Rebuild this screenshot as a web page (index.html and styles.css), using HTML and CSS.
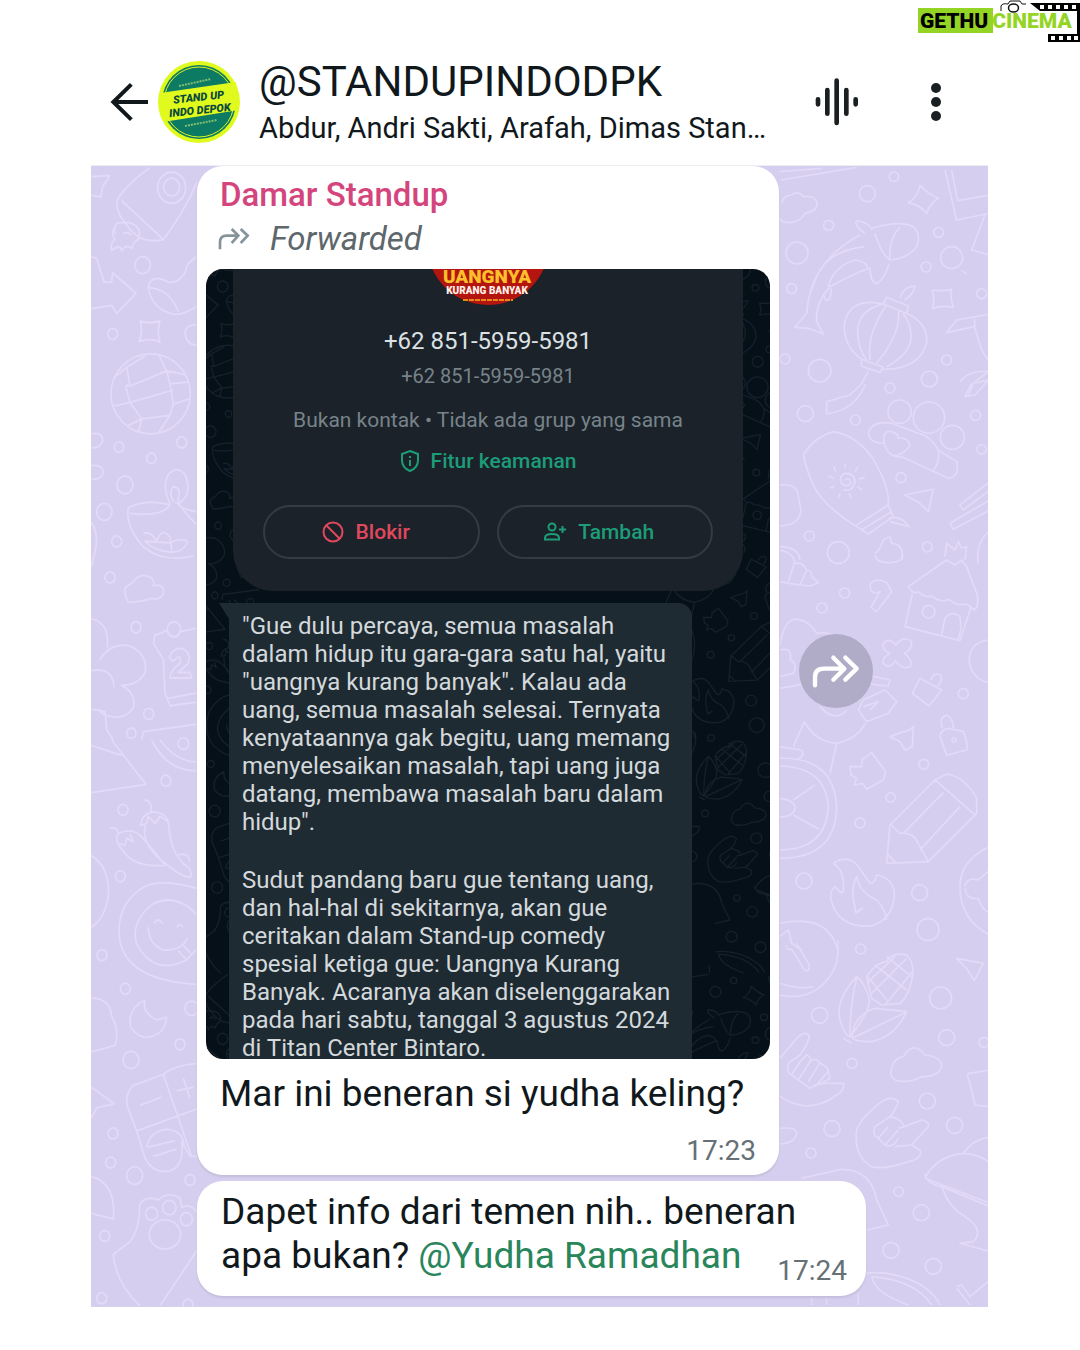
FILE: index.html
```html
<!DOCTYPE html>
<html lang="id">
<head>
<meta charset="utf-8">
<meta name="viewport" content="width=device-width, initial-scale=1">
<title>@STANDUPINDODPK</title>
<link rel="stylesheet" href="styles.css">
</head>
<body>
<svg class="defs" aria-hidden="true">
  <defs>
    <g id="doodles">
      <!-- left column, upper part -->
      <g transform="translate(90 160) scale(.3333 .37)">
        <path d="M4 45L60 42L38 72L32 100L4 95M180 20Q90 80 80 115Q82 150 110 175Q150 230 220 215Q290 130 320 60M95 110L220 215M75 180Q60 200 75 215Q60 225 65 245Q90 225 95 245Q110 225 125 240Q130 220 145 215Q155 195 140 180Q120 165 95 170Q70 165 75 200M100 200Q115 190 125 205M4 262L20 265L42 330L65 330L68 305L138 360L80 415L65 393L4 402M320 262Q290 275 285 305Q265 335 235 330Q180 305 175 345Q185 405 255 418Q290 415 320 395M178 345Q240 350 265 410M150 435Q180 445 210 435Q200 460 210 492Q180 480 148 490Q160 460 150 435M110 560L120 610L105 610M118 612L230 570L240 605L250 660L240 690L155 700L120 655L108 615M120 655L250 622M70 590L110 560L165 530M205 525L230 570L285 580M240 605L295 600M250 660L300 645M240 690L205 738M155 700L145 735M120 655L70 665M155 700L110 720M240 930Q215 880 235 850Q262 825 285 850Q300 880 290 905Q270 935 255 925M250 925Q235 895 250 883Q275 885 265 915Q262 935 320 985M115 940Q170 915 240 932Q220 965 120 955M115 940Q105 990 160 1045Q220 1090 310 1070M320 950Q280 945 262 930M160 1010Q180 1000 200 1030Q215 990 240 1020Q245 1045 245 1060M240 1035Q270 1020 292 1030Q285 1060 240 1060Q190 1055 165 1030ZM108 1180Q95 1155 125 1145Q150 1110 185 1130Q195 1145 190 1150Q225 1145 220 1170Q215 1190 185 1185Q155 1195 115 1195ZM4 1240Q60 1250 52 1320M30 1350Q65 1300 125 1315Q175 1340 165 1385Q145 1420 95 1420Q140 1440 130 1480Q110 1510 70 1505Q35 1500 25 1485M4 1380Q70 1370 72 1425M4 1485L45 1490L50 1540L70 1568M320 1265L270 1275Q265 1290 250 1290Q235 1285 230 1272L195 1285L190 1305L220 1350L225 1440L240 1475L320 1465M235 1455L320 1440M238 1345Q245 1320 275 1320Q305 1330 295 1360L265 1385L300 1385L305 1400L240 1400Q240 1380 270 1360Q275 1345 265 1342L250 1355ZM155 1568L160 1545L320 1525M4 980Q28 1010 15 1060L4 1100M4 740Q40 735 38 760Q30 780 4 778M4 825Q45 825 38 850Q30 865 4 862M320 445Q285 445 285 470Q290 500 320 500"/>
        <circle cx="245" cy="75" r="42"/><circle cx="245" cy="73" r="24"/><circle cx="158" cy="284" r="23"/><circle cx="68" cy="470" r="15"/><ellipse cx="182" cy="632" rx="119" ry="108"/><circle cx="275" cy="763" r="15"/><circle cx="87" cy="776" r="14"/><circle cx="184" cy="806" r="14"/><circle cx="105" cy="878" r="24"/><circle cx="43" cy="951" r="23"/><circle cx="80" cy="1031" r="15"/><circle cx="60" cy="1128" r="15"/><circle cx="138" cy="1263" r="15"/><circle cx="176" cy="1497" r="15"/><circle cx="252" cy="1268" r="20"/><circle cx="124" cy="1549" r="14"/>
      </g>
      <!-- left column, lower part -->
      <g transform="translate(90 740) scale(.3333 .3636)">
        <path d="M4 15L95 42M65 0L168 122L4 145M185 0Q230 85 320 85M210 0Q260 60 320 60M160 165Q190 165 182 200Q155 205 152 235L170 230L175 210L195 230L210 210L235 225Q225 195 182 198M165 235Q155 290 220 335Q270 375 300 378Q310 370 295 350Q240 320 235 220M60 240L80 245L85 258M85 258Q70 275 100 305Q130 350 225 345Q180 290 150 262Q120 240 85 258M90 285L105 290L110 270L130 280L120 258M265 315Q300 310 298 335M4 318Q60 350 55 430Q45 490 4 515M320 408Q210 380 160 405Q80 450 88 540Q100 660 320 672M320 480Q260 420 190 450Q120 500 140 560Q190 650 290 605L320 575M175 515Q175 560 220 578Q275 580 292 545M192 505Q205 485 218 505M260 515Q270 500 278 515M265 580L290 605M280 565L305 590M4 710Q60 710 65 760Q90 800 75 840L4 858M165 715Q110 740 122 790Q160 840 215 800Q230 780 230 762L200 770Q155 750 165 715M320 890Q250 895 220 920L130 950Q100 980 115 1015L140 1075L165 1150Q190 1195 240 1185Q285 1170 275 1105L300 1145L320 1145M220 920L305 1145M140 1075L320 1015M150 1005L215 982M260 965L310 955M280 930L300 985M170 1120Q180 1075 230 1070Q280 1075 282 1115M175 1120L255 1102M190 1145L260 1125M4 955L72 1000L20 1012L4 1040M4 1200Q80 1220 70 1318L4 1302M150 1300Q140 1265 180 1260Q195 1260 205 1265Q235 1240 270 1260L275 1285Q310 1275 320 1300M148 1300Q145 1350 120 1380L70 1415Q75 1490 150 1556M320 1405L210 1556"/>
        <circle cx="280" cy="10" r="16"/><circle cx="228" cy="112" r="15"/><circle cx="99" cy="192" r="15"/><circle cx="91" cy="375" r="15"/><circle cx="36" cy="592" r="15"/><circle cx="106" cy="684" r="15"/><circle cx="270" cy="837" r="15"/><circle cx="123" cy="880" r="24"/><circle cx="305" cy="738" r="20"/><circle cx="69" cy="1082" r="15"/><circle cx="62" cy="1162" r="15"/><circle cx="134" cy="1198" r="24"/><circle cx="300" cy="1210" r="15"/><circle cx="185" cy="1303" r="18"/><circle cx="238" cy="1286" r="20"/><circle cx="289" cy="1318" r="18"/><ellipse cx="225" cy="1360" rx="47" ry="40"/><circle cx="44" cy="1364" r="15"/><circle cx="35" cy="1535" r="15"/><circle cx="294" cy="1553" r="15"/>
      </g>
      <!-- right column, upper part -->
      <g transform="translate(775 160) scale(.3333)">
        <path d="M14 35L140 25M18 60L245 22M20 130Q25 105 50 105Q70 90 85 110Q120 105 127 130Q125 155 90 160Q75 185 45 188Q20 188 14 175M510 30L545 180L645 160M530 30L548 122L645 105M435 75Q455 100 490 115Q465 130 455 160Q435 135 400 128Q430 110 435 75M630 165L590 270L645 285M270 220Q235 195 245 183Q280 185 292 210M292 205Q370 180 415 200Q440 225 425 260Q400 295 345 300Q320 285 300 220M375 200Q340 240 345 295M255 225Q170 270 130 340Q100 390 95 460L60 502L100 505L145 522L125 485Q120 430 165 380Q230 345 280 325M268 260Q190 270 150 310Q125 340 110 390M160 380Q175 320 240 300Q280 305 278 330M285 322Q285 365 305 372Q330 355 342 312M145 400Q150 430 165 415L170 385M325 432L335 412L400 438L395 460ZM375 415Q385 380 420 378Q415 405 388 420M325 432Q225 410 208 490Q205 560 260 598M395 460Q460 490 455 550Q430 630 325 628M330 430Q245 450 248 520Q250 570 275 600M335 435Q275 520 285 600M370 450Q380 520 305 610M385 460Q450 560 335 620M260 598L325 622L315 638L258 618ZM280 635L260 672L225 705L155 725L155 762Q240 750 272 672M470 390Q500 395 530 388Q525 415 535 442Q505 435 472 445Q482 415 470 390M645 462L545 480L515 518L598 500L620 570L645 610M598 475L600 500M555 665Q580 630 640 635L600 665M580 705L595 670L640 660L600 705L570 710L590 670M560 332L575 342M280 820Q290 780 350 790L430 820Q470 830 490 870L545 905Q555 950 520 955L380 890Q340 895 328 850Q285 850 280 820M328 850Q320 810 350 815Q370 820 370 835Q395 830 405 855Q395 880 355 888M490 870Q495 910 475 930M85 885Q120 830 175 815Q240 825 290 890Q345 980 340 1035L355 1070L280 1122L245 1100Q150 1040 120 985Q95 935 85 885M245 1095L340 1035M262 1108L350 1055M340 1075Q380 1065 402 1100L345 1085M210 960Q225 950 228 970Q215 985 200 970Q190 950 210 940Q240 940 240 965Q235 995 205 990M210 925V910M175 920L183 935M160 948L175 955M165 985L178 978M190 1015L195 1000M228 1015L222 1000M262 990L248 982M270 952L252 957M250 920L240 935M390 1005L475 988L460 1055L435 1030ZM645 965L555 1035L565 1050L645 990M645 1020L525 1090L535 1108L645 1050M14 975Q70 970 70 1010L78 1050Q75 1095 14 1098M300 1180Q315 1170 325 1140L345 1130L350 1150Q390 1155 380 1200M645 1110Q600 1150 610 1210M510 1190L515 1150L540 1170L550 1145L560 1165L575 1160L570 1200M14 1160Q70 1160 75 1200"/>
        <circle cx="357" cy="50" r="14"/><circle cx="277" cy="101" r="24"/><circle cx="161" cy="196" r="15"/><circle cx="66" cy="279" r="33"/><circle cx="491" cy="217" r="15"/><circle cx="530" cy="293" r="33"/><circle cx="453" cy="321" r="15"/><circle cx="50" cy="386" r="15"/><circle cx="620" cy="401" r="15"/><circle cx="30" cy="597" r="15"/><circle cx="515" cy="600" r="15"/><circle cx="134" cy="632" r="34"/><circle cx="463" cy="657" r="24"/><circle cx="345" cy="684" r="15"/><circle cx="91" cy="761" r="24"/><circle cx="241" cy="780" r="15"/><circle cx="374" cy="755" r="35"/><circle cx="462" cy="773" r="47"/><circle cx="532" cy="832" r="36"/><circle cx="602" cy="766" r="15"/><circle cx="620" cy="868" r="14"/><circle cx="378" cy="953" r="15"/><circle cx="103" cy="1128" r="15"/><circle cx="190" cy="1178" r="33"/><circle cx="457" cy="1161" r="15"/>
      </g>
      <!-- right column, middle part -->
      <g transform="translate(775 550) scale(.3333)">
        <path d="M14 0Q60 10 58 40Q85 35 95 60Q110 60 110 80L130 98L105 108Q60 105 14 95M58 40L40 95M95 60L75 105M300 15Q305 40 345 38Q390 35 382 10M515 30L400 110Q415 135 430 125Q450 145 470 138Q500 160 520 148Q550 170 575 162L600 180Q615 160 605 130L575 50L560 30L540 45ZM412 130L390 230L555 272L588 172M500 255L510 205Q530 180 555 200L558 235L550 268M285 105Q300 80 335 98L350 125L305 185L288 172L315 125L300 130Q285 125 285 105M325 280Q345 260 362 285Q385 255 410 275Q410 300 388 310Q415 330 405 350Q380 360 362 332Q340 360 325 340Q320 325 345 310Q320 300 325 280M645 270Q585 275 582 330Q590 390 645 398M412 430L435 385L500 420L462 468ZM468 390Q475 365 497 375Q505 390 488 408M495 560Q495 540 520 535L565 545Q580 580 575 600L515 616ZM503 535Q490 505 515 495Q535 505 535 535M345 560L385 545Q400 545 415 530L412 590L390 600L375 575ZM225 650L260 650L262 628L290 608L332 665L325 690L275 718L262 700L238 705L245 685L228 675ZM14 285Q30 200 70 208Q105 215 125 250Q180 240 190 285M14 300Q55 290 45 330Q70 340 55 370L14 380M14 415L100 400M95 310L180 330L160 400L270 430M275 375L345 390L340 408L265 400M250 480L275 515L340 490L365 455L330 420L265 450ZM265 470L310 455L285 480M55 590L88 515Q120 575 185 580Q250 565 270 520M185 580L165 670M135 470Q180 520 215 480M14 590L80 600Q90 620 70 625M14 625Q180 620 185 775Q180 925 14 925M14 648Q155 650 160 775Q150 900 14 900M14 745Q60 750 60 775Q55 800 14 802M55 750L120 705M55 795L132 838M345 825L480 690L515 672Q570 680 605 745L605 790L460 935L335 940ZM480 690L600 795M385 850L505 728M435 900L555 770M348 825L375 850Q415 845 430 880L460 935M335 910L362 938M175 940Q220 910 250 950L285 1000Q300 1000 305 975Q360 985 358 1040Q350 1110 290 1128Q190 1135 168 1050Q165 1020 180 1010Q200 1035 205 1025Q210 960 175 940M240 1070Q225 1020 245 980Q255 1030 305 1050Q335 1085 335 1110M240 1070Q240 1100 262 1075L240 1090M645 890Q555 930 555 1010Q555 1110 645 1155M570 1010Q575 980 610 990L645 960M570 1015Q575 1050 610 1045Q620 1080 645 1090M14 1120Q160 1090 188 1200M14 1160L40 1140L50 1180L80 1200"/>
        <circle cx="209" cy="129" r="15"/><circle cx="141" cy="174" r="15"/><circle cx="461" cy="185" r="19"/><circle cx="565" cy="431" r="15"/><circle cx="446" cy="643" r="15"/><circle cx="347" cy="742" r="14"/><circle cx="255" cy="819" r="15"/><circle cx="87" cy="993" r="24"/><circle cx="434" cy="1028" r="24"/><circle cx="459" cy="1139" r="33"/><circle cx="537" cy="570" r="6"/>
      </g>
      <!-- right column, lower part -->
      <g transform="translate(775 940) scale(.3333)">
        <path d="M188 0Q200 90 130 145Q80 180 14 165M14 130Q70 150 115 140M35 15Q30 30 50 28L90 92Q105 95 103 75L65 10M545 55L625 70L598 122L575 85ZM275 110Q300 70 335 65Q350 35 395 45Q420 70 412 115Q400 170 375 190L320 195L290 175ZM300 75L395 150M335 50L410 110M278 110L340 185M395 55L290 160M412 95L330 195M360 50L275 130M245 110Q180 180 195 240Q210 290 225 290Q290 210 282 175Q270 130 245 110M245 115Q225 190 225 290M232 295Q230 230 300 205L395 215Q360 290 290 305Q240 305 232 295M232 295L390 218M205 295L230 310M14 355L70 290Q95 270 103 290Q100 310 75 345L40 370Q35 400 50 405L105 445L130 430L205 430Q210 450 185 465Q140 500 85 497Q40 490 14 468M50 405Q75 360 95 345Q110 350 105 365L70 420M105 365Q120 350 135 368L100 425M135 370Q160 380 160 395L120 440M160 395L165 415L130 435M350 385Q355 355 385 350Q415 300 450 345Q500 350 500 380Q490 410 440 410Q400 430 365 422Q340 410 350 385M245 570Q260 530 320 485Q350 465 370 485Q360 515 345 530Q380 535 388 560L440 540Q465 545 460 560L410 615L435 630Q445 655 400 665Q330 690 290 680Q235 650 245 570M345 530L300 560Q290 585 310 595L340 560M310 595L330 615L370 570M330 615Q355 625 370 595M388 560L370 565M360 620L410 615M645 390L580 400Q575 410 585 430L600 495L645 500M14 565Q65 560 65 580Q60 610 14 612M80 715L200 688Q290 690 305 780L340 855L275 870M645 590Q590 600 565 640M450 715Q480 650 565 640Q620 645 645 670M450 715L645 790M450 700Q450 730 500 740L645 800M500 740Q520 800 570 830Q630 870 595 905L555 910L645 935M275 1000Q350 990 430 1030Q480 1060 495 1095M290 1010Q300 1060 400 1095M290 1010Q420 1020 470 1095M250 1095V1060M545 1040L560 1035L585 1070L645 1020M545 1045L585 1095M110 1095V1070M155 1095V1070"/>
        <circle cx="257" cy="27" r="15"/><circle cx="134" cy="226" r="24"/><circle cx="497" cy="174" r="33"/><circle cx="515" cy="293" r="24"/><circle cx="231" cy="370" r="15"/><circle cx="457" cy="483" r="24"/><circle cx="171" cy="566" r="24"/><circle cx="539" cy="556" r="24"/><circle cx="108" cy="639" r="15"/><circle cx="371" cy="755" r="14"/><circle cx="439" cy="818" r="24"/><circle cx="348" cy="931" r="24"/><circle cx="475" cy="979" r="24"/><circle cx="627" cy="307" r="15"/>
      </g>
    </g>
  </defs>
</svg>

<div class="watermark">
  <svg class="film" viewBox="0 0 162 42" aria-hidden="true">
    <rect x="0" y="8" width="75" height="25" fill="#94d424"/>
    <path fill="#000" d="M112 3H162V42H130V34H159V11H122Z"/>
    <path fill="#fff" d="M122 5h4v4h-4zM130 5h4v4h-4zM138 5h4v4h-4zM146 5h4v4h-4zM154 5h4v4h-4zM133 36h4v4h-4zM141 36h4v4h-4zM149 36h4v4h-4zM156 36h4v4h-4z"/>
    <path fill="#fff" stroke="#111" d="M83 11V6Q84 3 90 4L92 1H102L104 4H108"/>
    <ellipse cx="95.500" cy="8" rx="5" ry="4" fill="#fff" stroke="#111" stroke-width="1.500"/>
  </svg>
  <p class="brand"><span class="brand-dark">GETHU</span><span class="brand-lime">CINEMA</span></p>
</div>

<main class="screen">
  <header class="topbar">
    <button class="icon-btn back" aria-label="Kembali">
      <svg width="40" height="40" viewBox="60 120 120 120"><path d="M174 180H70M124 127L70 180L124 233" fill="none" stroke="#11181c" stroke-width="12"/></svg>
    </button>
    <svg class="group-photo" viewBox="0 0 84 84" role="img" aria-label="Stand Up Indo Depok">
      <circle cx="42" cy="42" r="41" fill="#e0fa1e"/>
      <circle cx="42" cy="42" r="37" fill="#0d7a63"/>
      <circle cx="42" cy="42" r="35" fill="none" stroke="#d8f51e" stroke-width="1"/>
      <path d="M3 33L79 22L82 50L6 62Z" fill="#e0fa1e"/>
      <path d="M22 26L54 19M28 66L60 60" stroke="#7fbf74" stroke-width="2" stroke-dasharray="2 1"/>
      <g class="photo-text" transform="rotate(-6 42 42)">
        <text x="42" y="41" text-anchor="middle">STAND UP</text>
        <text x="42" y="54" text-anchor="middle">INDO DEPOK</text>
      </g>
    </svg>
    <div class="group">
      <h1>@STANDUPINDODPK</h1>
      <p>Abdur, Andri Sakti, Arafah, Dimas Stan…</p>
    </div>
    <div class="actions">
      <button class="icon-btn" aria-label="Obrolan suara">
        <svg width="46" height="52" viewBox="104 225 138 156"><path d="M116 295V310M144 267V338M172 239V366M201 267V338M229 295V310" fill="none" stroke="#1a1f22" stroke-width="14" stroke-linecap="round"/></svg>
      </button>
      <button class="icon-btn" aria-label="Menu">
        <svg width="24" height="44" viewBox="433 237 72 132" fill="#1a1f22"><circle cx="469" cy="261" r="15"/><circle cx="469" cy="303" r="15"/><circle cx="469" cy="345" r="15"/></svg>
      </button>
    </div>
  </header>

  <section class="chat">
    <svg class="wallpaper" viewBox="91 166 897 1141" preserveAspectRatio="xMidYMin slice" aria-hidden="true"><use href="#doodles"/></svg>

    <div class="thread">
      <div class="row">
        <article class="bubble bubble-media">
          <h2>Damar Standup</h2>
          <p class="forwarded">
            <svg width="32" height="24" viewBox="385 557 96 72" aria-hidden="true"><path d="M391 624V603Q391 583 411 583H444M426 563L446 583L426 605M453 563L474 583L453 605" fill="none" stroke="#87939a" stroke-width="8"/></svg>
            Forwarded
          </p>

          <div class="shot">
            <svg class="shot-wall" viewBox="206 269 564 790" preserveAspectRatio="xMidYMin slice" aria-hidden="true">
              <use href="#doodles" transform="translate(131 114) scale(.67 .65)"/>
              <use href="#doodles" transform="translate(131 855) scale(.67 .65)"/>
            </svg>
            <div class="shot-body">
              <div class="contact">
                <svg class="contact-photo" width="122" height="36" viewBox="0 86 122 36" role="img" aria-label="Uangnya Kurang Banyak">
                  <circle cx="61" cy="61" r="61" fill="#b5150f"/>
                  <text class="poster-title" x="60" y="100" text-anchor="middle">UANGNYA</text>
                  <text class="poster-sub" x="60" y="111" text-anchor="middle">KURANG BANYAK</text>
                  <path d="M36 117H86" stroke="#e88a1a" stroke-width="2" stroke-dasharray="5 1"/>
                </svg>
                <p class="phone">+62 851-5959-5981</p>
                <p class="phone-sub">+62 851-5959-5981</p>
                <p class="status">Bukan kontak • Tidak ada grup yang sama</p>
                <a class="safety" href="#">
                  <svg width="20" height="24" viewBox="0 0 20 24" fill="none" stroke="currentColor" stroke-width="2" aria-hidden="true"><path d="M10 2L18 5V11Q18 19 10 22Q2 19 2 11V5ZM10 11V17M10 7V9"/></svg>
                  Fitur keamanan
                </a>
                <div class="choices">
                  <button class="pill block">
                    <svg width="24" height="24" viewBox="0 0 24 24" fill="none" stroke="currentColor" stroke-width="2" aria-hidden="true"><circle cx="12" cy="12" r="9.500"/><path d="M5.500 5.500L18.500 18.500"/></svg>
                    Blokir
                  </button>
                  <button class="pill add">
                    <svg width="24" height="24" viewBox="0 0 24 24" fill="none" stroke="currentColor" stroke-width="2" aria-hidden="true"><circle cx="9" cy="7" r="3.500"/><path d="M2 19.500V18Q2 14 9 14T16 18V19.500ZM19.500 6V13M16 9.500H23"/></svg>
                    Tambah
                  </button>
                </div>
              </div>
              <div class="quote-row">
                <svg class="tail" width="10" height="16" viewBox="0 0 10 16" aria-hidden="true"><path d="M0 0H10V16Z" fill="#1f2b32"/></svg>
                <div class="quote">
                  <p>"Gue dulu percaya, semua masalah<br>dalam hidup itu gara-gara satu hal, yaitu<br>"uangnya kurang banyak". Kalau ada<br>uang, semua masalah selesai. Ternyata<br>kenyataannya gak begitu, uang memang<br>menyelesaikan masalah, tapi uang juga<br>datang, membawa masalah baru dalam<br>hidup".</p>
                  <p>Sudut pandang baru gue tentang uang,<br>dan hal-hal di sekitarnya, akan gue<br>ceritakan dalam Stand-up comedy<br>spesial ketiga gue: Uangnya Kurang<br>Banyak. Acaranya akan diselenggarakan<br>pada hari sabtu, tanggal 3 agustus 2024<br>di Titan Center Bintaro.</p>
                </div>
              </div>
            </div>
          </div>

          <p class="text">Mar ini beneran si yudha keling?</p>
          <time class="time">17:23</time>
        </article>
        <button class="share" aria-label="Teruskan">
          <svg width="74" height="74" viewBox="72 246 222 222" aria-hidden="true"><path d="M120 400V376Q120 350 146 350H206M175 317L208 350L175 383M211 317L245 350L211 383" fill="none" stroke="#fff" stroke-width="13" stroke-linecap="round" stroke-linejoin="round"/></svg>
        </button>
      </div>

      <article class="bubble bubble-text">
        <p class="text">Dapet info dari temen nih.. beneran<br>apa bukan? <a href="#">@Yudha Ramadhan</a></p>
        <time class="time">17:24</time>
      </article>
    </div>
  </section>
</main>
</body>
</html>
```
FILE: styles.css
```css
* {
  box-sizing: border-box;
}

body,
h1,
h2,
p {
  margin: 0;
}

body {
  background: #fff;
  color: #11181c;
  font-family: Roboto, "Liberation Sans", sans-serif;
}

button {
  margin: 0;
  padding: 0;
  border: 0;
  background: none;
  font: inherit;
  cursor: pointer;
}

a {
  color: inherit;
  text-decoration: none;
}

svg {
  display: block;
  flex: none;
}

.defs {
  position: absolute;
  width: 0;
  height: 0;
}

/* Channel mark pinned over the top corner */
.watermark {
  position: absolute;
  top: 0;
  right: 0;
  display: grid;
  grid-template-columns: minmax(0, 1fr);
  width: 162px;
  height: 42px;
}

.film,
.brand {
  grid-area: 1 / 1;
}

.brand {
  display: flex;
  gap: 4px;
  padding: 9px 0 0 2px;
  font-size: 21px;
  font-weight: 900;
  line-height: 24px;
}

.brand-dark {
  color: #000;
}

.brand-lime {
  color: #94d424;
}

.screen {
  padding: 0 92px 43px 91px;
}

/* Header */
.topbar {
  display: flex;
  align-items: center;
  padding: 57px 40px 19px 19px;
  border-bottom: 1px solid #ececf0;
}

.group-photo {
  width: 84px;
  height: 84px;
  margin: 0 18px 0 7px;
}

.photo-text {
  font-size: 11px;
  font-style: italic;
  font-weight: 900;
  fill: #0b4a3c;
}

.group {
  white-space: nowrap;
}

.group h1 {
  font-size: 42px;
  font-weight: 400;
  line-height: 50px;
}

.group p {
  padding-top: 3px;
  font-size: 29px;
  line-height: 36px;
}

.actions {
  display: flex;
  align-items: center;
  gap: 64px;
  margin-left: auto;
}

/* Conversation */
.chat {
  display: grid;
  background: #d6ceee;
}

.wallpaper,
.thread {
  grid-area: 1 / 1;
  min-width: 0;
}

.wallpaper {
  width: 100%;
  height: 100%;
  contain: size;
  fill: none;
  stroke: #e2daf7;
  stroke-width: 5;
  stroke-linejoin: round;
}

.thread {
  display: flex;
  flex-direction: column;
  gap: 6px;
  padding: 0 20px 11px 106px;
}

.row {
  display: flex;
  align-items: center;
  gap: 20px;
}

.bubble {
  border-radius: 26px;
  background: #fff;
  box-shadow: 0 2px 2px #c5bddb;
}

.bubble-media {
  flex: 0 1 582px;
  padding: 9px 9px 8px;
}

.bubble-media h2 {
  padding-left: 14px;
  color: #d3457c;
  font-size: 33px;
  font-weight: 500;
  line-height: 40px;
}

.forwarded {
  display: flex;
  align-items: center;
  gap: 20px;
  padding: 4px 12px 10px;
  color: #5d676c;
  font-size: 33px;
  font-style: italic;
  line-height: 40px;
}

.text {
  font-size: 37px;
  line-height: 44px;
}

.text a {
  color: #29855a;
}

.time {
  color: #667075;
  font-size: 28px;
  line-height: 32px;
}

.bubble-media .text {
  padding: 13px 14px 0;
}

.bubble-media .time {
  display: block;
  padding: 19px 14px 0;
  text-align: right;
}

.bubble-text {
  display: grid;
  max-width: 669px;
  padding: 9px 19px 9px 24px;
}

.bubble-text .text {
  grid-area: 1 / 1;
  padding-bottom: 9px;
}

.bubble-text .time {
  grid-area: 1 / 1;
  place-self: end;
}

.share {
  border-radius: 50%;
  background: #b0acc8;
}

/* Forwarded picture: a dark profile screen */
.shot {
  display: grid;
  height: 790px;
  overflow: hidden;
  border-radius: 17px;
  background: #061018;
}

.shot-wall,
.shot-body {
  grid-area: 1 / 1;
  min-width: 0;
}

.shot-wall {
  width: 100%;
  height: 100%;
  fill: none;
  stroke: #14212a;
  stroke-width: 6;
}

.shot-body {
  padding: 0 27px 0 13px;
}

.contact {
  display: flex;
  flex-direction: column;
  align-items: center;
  margin-left: 14px;
  padding: 0 30px 32px;
  border-radius: 0 0 40px 40px;
  background: #1b2229;
  line-height: 28px;
}

.poster-title {
  font-size: 19px;
  font-weight: 900;
  fill: #fbc02a;
}

.poster-sub {
  font-size: 10px;
  font-weight: 900;
  fill: #fff0e8;
}

.phone {
  margin-top: 20px;
  color: #dce1e4;
  font-size: 24px;
  line-height: 32px;
}

.phone-sub {
  margin-top: 5px;
  color: #77838a;
  font-size: 20px;
}

.status {
  margin-top: 16px;
  color: #77838a;
  font-size: 21px;
}

.safety {
  display: flex;
  align-items: center;
  gap: 11px;
  margin-top: 13px;
  color: #1d9c79;
  font-size: 21px;
  font-weight: 500;
}

.choices {
  display: grid;
  grid-template-columns: 1fr 1fr;
  gap: 17px;
  align-self: stretch;
  margin-top: 30px;
}

.pill {
  display: flex;
  align-items: center;
  justify-content: center;
  gap: 11px;
  height: 54px;
  padding-right: 12px;
  border: 2px solid #333c43;
  border-radius: 27px;
  font-size: 21px;
  font-weight: 500;
}

.block {
  color: #e0485e;
}

.add {
  color: #1d9c79;
}

.quote-row {
  display: flex;
  padding-top: 12px;
}

.quote {
  width: 463px;
  padding: 9px 13px;
  border-radius: 0 14px 0 0;
  background: #1f2b32;
  color: #d3d9dc;
  font-size: 24px;
  line-height: 28px;
  white-space: nowrap;
}

.quote p + p {
  margin-top: 30px;
}
```
